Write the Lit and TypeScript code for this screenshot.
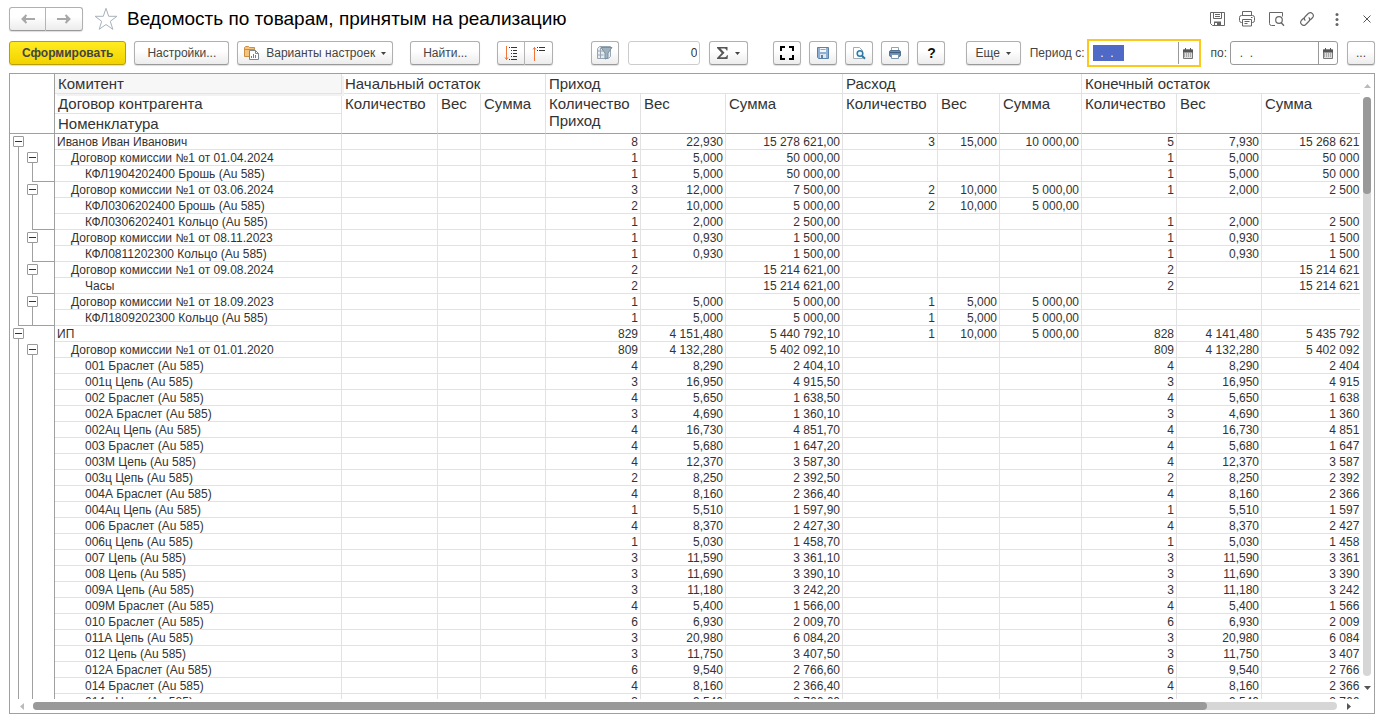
import { LitElement, html, css, svg, nothing } from "lit";
import { customElement } from "lit/decorators.js";
import { classMap } from "lit/directives/class-map.js";

type Row = {
  level: 0 | 1 | 2;
  name: string;
  income: [string, string, string];
  outcome?: [string, string, string];
  balance?: [string, string, string];
  /** Which outline brackets finish on this row: 1 - contract, 2 - contract and consignor. */
  closes?: 1 | 2;
};

const item = (name: string, qty: string, weight: string, sum: string, closes?: 1 | 2): Row => ({
  level: 2, name, income: [qty, weight, sum], balance: [qty, weight, sum], closes,
});

const rows: Row[] = [
  { level: 0, name: "Иванов Иван Иванович", income: ["8", "22,930", "15 278 621,00"], outcome: ["3", "15,000", "10 000,00"], balance: ["5", "7,930", "15 268 621,00"] },
  { level: 1, name: "Договор комиссии №1 от 01.04.2024", income: ["1", "5,000", "50 000,00"], balance: ["1", "5,000", "50 000,00"] },
  item("КФЛ1904202400 Брошь (Au 585)", "1", "5,000", "50 000,00", 1),
  { level: 1, name: "Договор комиссии №1 от 03.06.2024", income: ["3", "12,000", "7 500,00"], outcome: ["2", "10,000", "5 000,00"], balance: ["1", "2,000", "2 500,00"] },
  { level: 2, name: "КФЛ0306202400 Брошь (Au 585)", income: ["2", "10,000", "5 000,00"], outcome: ["2", "10,000", "5 000,00"] },
  item("КФЛ0306202401 Кольцо (Au 585)", "1", "2,000", "2 500,00", 1),
  { level: 1, name: "Договор комиссии №1 от 08.11.2023", income: ["1", "0,930", "1 500,00"], balance: ["1", "0,930", "1 500,00"] },
  item("КФЛ0811202300 Кольцо (Au 585)", "1", "0,930", "1 500,00", 1),
  { level: 1, name: "Договор комиссии №1 от 09.08.2024", income: ["2", "", "15 214 621,00"], balance: ["2", "", "15 214 621,00"] },
  item("Часы", "2", "", "15 214 621,00", 1),
  { level: 1, name: "Договор комиссии №1 от 18.09.2023", income: ["1", "5,000", "5 000,00"], outcome: ["1", "5,000", "5 000,00"] },
  { level: 2, name: "КФЛ1809202300 Кольцо (Au 585)", income: ["1", "5,000", "5 000,00"], outcome: ["1", "5,000", "5 000,00"], closes: 2 },
  { level: 0, name: "ИП", income: ["829", "4 151,480", "5 440 792,10"], outcome: ["1", "10,000", "5 000,00"], balance: ["828", "4 141,480", "5 435 792,10"] },
  { level: 1, name: "Договор комиссии №1 от 01.01.2020", income: ["809", "4 132,280", "5 402 092,10"], balance: ["809", "4 132,280", "5 402 092,10"] },
  item("001 Браслет (Au 585)", "4", "8,290", "2 404,10"),
  item("001ц Цепь (Au 585)", "3", "16,950", "4 915,50"),
  item("002 Браслет (Au 585)", "4", "5,650", "1 638,50"),
  item("002А Браслет (Au 585)", "3", "4,690", "1 360,10"),
  item("002Ац Цепь (Au 585)", "4", "16,730", "4 851,70"),
  item("003 Браслет (Au 585)", "4", "5,680", "1 647,20"),
  item("003М Цепь (Au 585)", "4", "12,370", "3 587,30"),
  item("003ц Цепь (Au 585)", "2", "8,250", "2 392,50"),
  item("004А Браслет (Au 585)", "4", "8,160", "2 366,40"),
  item("004Ац Цепь (Au 585)", "1", "5,510", "1 597,90"),
  item("006 Браслет (Au 585)", "4", "8,370", "2 427,30"),
  item("006ц Цепь (Au 585)", "1", "5,030", "1 458,70"),
  item("007 Цепь (Au 585)", "3", "11,590", "3 361,10"),
  item("008 Цепь (Au 585)", "3", "11,690", "3 390,10"),
  item("009А Цепь (Au 585)", "3", "11,180", "3 242,20"),
  item("009М Браслет (Au 585)", "4", "5,400", "1 566,00"),
  item("010 Браслет (Au 585)", "6", "6,930", "2 009,70"),
  item("011А Цепь (Au 585)", "3", "20,980", "6 084,20"),
  item("012 Цепь (Au 585)", "3", "11,750", "3 407,50"),
  item("012А Браслет (Au 585)", "6", "9,540", "2 766,60"),
  item("014 Браслет (Au 585)", "4", "8,160", "2 366,40"),
  item("014ц Цепь (Au 585)", "3", "9,540", "2 766,60"),
];

const columnWidths = [45, 287, 96, 43, 65, 95, 85, 117, 95, 62, 82, 95, 85, 117];

const icon = (w: number, h: number, body: unknown) =>
  html`<svg width=${w} height=${h} viewBox="0 0 ${w} ${h}" fill="none" aria-hidden="true">${body}</svg>`;

const arrow = (d: string) => icon(14, 10, svg`<path d=${d} stroke="#a8a8a8" stroke-width="2"/>`);
const backIcon = arrow("M14 5H2M5.500 1L1.500 5l4 4M4 3v4");
const forwardIcon = arrow("M0 5h12M8.500 1l4 4-4 4M10 3v4");
const starIcon = icon(24, 24, svg`<path d="M12 1.300l2.700 8h8.200l-6.600 5 2.500 8L12 17.500l-6.800 4.800 2.500-8-6.600-5h8.200z" stroke="#a9b1ba"/>`);
const caretIcon = icon(5, 3, svg`<path d="M0 0h5L2.500 3z" fill="#444"/>`);

const saveIcon = icon(16, 16, svg`<path d="M1.500 1.500h14v13h-12l-2-2z M4.500 1.500v6h8v-6 M6 3.500h5M6 5.500h5" stroke="#666"/><path d="M5 10.500h7v4H5z" fill="#666"/><path d="M6 12h2v2H6z" fill="#fff"/>`);
const printIcon = icon(16, 16, svg`<path d="M3.500 4.500v-4h9v4M3.500 11.500h-1a2 2 0 0 1-2-2v-3a2 2 0 0 1 2-2h11a2 2 0 0 1 2 2v3a2 2 0 0 1-2 2h-1M3.500 8.500h9v6.500h-9zM5.500 10.500h5M5.500 12.500h3M12 6.500h1.500" stroke="#666"/>`);
const previewIcon = icon(16, 16, svg`<path d="M6 14.500H2.500a2 2 0 0 1-2-2V1.500h13v4" stroke="#666"/><circle cx="10" cy="9" r="3.300" stroke="#666" stroke-width="1.200"/><path d="M12 11.500l3 3.200" stroke="#666" stroke-width="1.400"/>`);
const linkIcon = icon(16, 16, svg`<path d="M6.300 9.700a3 3 0 0 1 0-4.200l3.200-3.200a3 3 0 0 1 4.200 4.200l-2.500 2.500M9.700 6.300a3 3 0 0 1 0 4.200l-3.200 3.200a3 3 0 0 1-4.200-4.200L4.800 7" stroke="#666" stroke-width="1.200"/>`);
const moreIcon = icon(4, 13, svg`<circle cx="2" cy="1.500" r="1.500" fill="#666"/><circle cx="2" cy="6.500" r="1.500" fill="#666"/><circle cx="2" cy="11.500" r="1.500" fill="#666"/>`);
const closeIcon = icon(8, 8, svg`<path d="M.5.5l7 7M7.500.5l-7 7" stroke="#555"/>`);

const variantsIcon = icon(16, 16, svg`<path d="M.5 2.500l1-1h3l1 1h5v3h-3v6h-7z" fill="#f5c37c" stroke="#c98f45"/><path d="M1 4.500h9" stroke="#c98f45"/><path d="M5.500 5.500h6l3 3v6h-9z" fill="#fff" stroke="#7d8790"/><path d="M11.500 5.500v3h3" stroke="#7d8790"/><path d="M7.500 11v2" stroke="#d9534f"/><path d="M9.500 9v4" stroke="#3aa655"/><path d="M11.500 10v3" stroke="#d9534f"/>`);
const expandGroupsIcon = icon(14, 15, svg`<path d="M2.500 0v14M1 11.500l1.500 2 1.500-2" stroke="#f0763c"/><path d="M5 1.500h1M7 1.500h6M7 4.500h1M9 4.500h4M7 7.500h1M9 7.500h4M7 10.500h1M9 10.500h4M5 13.500h1M7 13.500h6" stroke="#333"/>`);
const collapseGroupsIcon = icon(14, 15, svg`<path d="M2.500 15V1M1 3.500l1.500-2 1.500 2" stroke="#f0763c"/><path d="M5 1.500h1M7 1.500h6M5 4.500h1M7 4.500h6" stroke="#333"/>`);
const filterIcon = icon(16, 16, svg`<path d="M.5 3.500l2-2h11v10l-2 2H.5z" fill="#e6ebef" stroke="#98a6b3"/><path d="M.5 6h6M.5 10h6M3.500 3v11" stroke="#98a6b3"/><path d="M4 2.500h11L11 8v5l-3 1V8z" fill="#9fb0bf" stroke="#7890a3"/>`);
const sigmaIcon = icon(12, 12, svg`<path d="M0 0h10.500v3.500h-1C9 2 8.500 1.500 7 1.500H3.500l4 4.200-4.500 4.500h4.500c1.500 0 2-.7 2.500-2h1L10.500 12H0v-1l4.700-5L0 1z" fill="#555"/>`);
const fullIcon = icon(14, 14, svg`<path d="M1 5V1h4M9 1h4v4M13 9v4H9M5 13H1V9" stroke="#000" stroke-width="2"/>`);
const diskIcon = icon(14, 14, svg`<path d="M1.500 1.500h11v11h-10l-1-1z" fill="#8fb2d4" stroke="#5b82a8"/><path d="M4 2h6v4H4z" fill="#f5f8fb"/><path d="M4.500 3.500h5" stroke="#8fa8bd"/><path d="M4 8h6v4H4z" fill="#dfe8f0"/><path d="M5 9h2v3H5z" fill="#5b82a8"/>`);
const lookIcon = icon(14, 14, svg`<path d="M1.500 1.500h6l3 3v8h-9z" fill="#fff" stroke="#a3abb3"/><circle cx="8" cy="7.500" r="2.800" fill="#eaf4fa" stroke="#2a7aa8" stroke-width="1.500"/><path d="M10 9.800l3 3" stroke="#2a7aa8" stroke-width="2"/>`);
const printerIcon = icon(14, 14, svg`<path d="M3.500 5V1.500h7V5" fill="#fff" stroke="#90a4b8"/><rect x="1.500" y="4.500" width="11" height="6" rx="1.500" fill="#6f90b0" stroke="#4f7292"/><path d="M2 6.500h10" stroke="#3f6080"/><path d="M3.500 8.500h7v4h-7z" fill="#fff" stroke="#7b96b0"/>`);
const calendarIcon = icon(10, 11, svg`<path d="M.5 2h9v8.500h-9z" fill="#ddd" stroke="#777"/><path d="M0 1.500h10v3H0z" fill="#555"/><path d="M2.500 0v2M7.500 0v2" stroke="#555"/><path d="M1 6h8M1 8h8" stroke="#777" stroke-dasharray="1 1"/>`);

@customElement("report-grid")
export class ReportGrid extends LitElement {
  static styles = css`
    :host { display: grid; grid-template: minmax(0, 1fr) 14px / minmax(0, 1fr) 14px; border: 1px solid #a0a0a0; background: #fff; color: #333; font: 12px/14px "Liberation Sans", Arial, sans-serif; }
    .viewport { overflow: auto; scrollbar-width: none; }
    table { border-collapse: separate; border-spacing: 0; table-layout: fixed; width: max-content; }
    th, td { box-sizing: border-box; padding: 0 2px; border: 0 solid #e2e2e2; border-width: 0 1px 1px 0; white-space: nowrap; }
    th { height: 20px; padding: 1px 3px; font-size: 15px; line-height: 17px; font-weight: 400; text-align: left; vertical-align: top; }
    td { height: 16px; text-align: right; }
    .current { position: relative; background: #f7f7f7; box-shadow: 2px 2px 0 #f2f2f2; }
    .last { border-bottom-color: #a0a0a0; }
    .gutter { padding: 0 0 0 3px; border-right-color: #a0a0a0; }
    td.gutter { border-bottom: 0; }
    .lanes { display: flex; height: 16px; }
    .lane { display: flex; flex-direction: column; width: 14px; }
    .lane:last-child { flex: 1; }
    .lane.boxed { padding-top: 2px; height: 14px; }
    .stem { flex: 1; margin-left: 5px; border-left: 1px solid #a0a0a0; }
    .closed .stem, .lane.joined { border-bottom: 1px solid #a0a0a0; }
    .lane.joined .stem { border-bottom: 0; margin-bottom: -1px; }
    .toggle { display: grid; place-items: center; width: 11px; height: 11px; padding: 0; border: 1px solid #999; border-radius: 1px; background: #fff; }
    .name { text-align: left; }
    .level1 { padding-left: 16px; }
    .level2 { padding-left: 30px; }
    .bar { display: flex; align-items: center; }
    .vertical { flex-direction: column; }
    .end { display: grid; place-items: center; flex: none; width: 23px; height: 14px; padding: 0; border: 0; background: none; }
    .vertical .end { width: 14px; height: 23px; }
    .track { flex: 1; height: 8px; border-radius: 4px; background: #d6d6d6; }
    .vertical .track { width: 8px; height: auto; }
    .thumb { height: 8px; width: 90%; border-radius: 4px; background: #999; }
    .vertical .thumb { width: 8px; height: 97px; }
  `;

  private lanes(row: Row, inContract: boolean) {
    const box = html`<button class="toggle" aria-label="Свернуть">${icon(7, 1, svg`<path d="M0 .5h7" stroke="#333"/>`)}</button>`;
    const both = row.closes === 2;
    return html`<div class="lanes">
      <div class=${classMap({ lane: true, boxed: row.level === 0, closed: both })}>
        ${row.level === 0 ? box : nothing}<div class="stem"></div>
      </div>
      <div class=${classMap({ lane: true, boxed: row.level === 1, closed: row.closes === 1, joined: both })}>
        ${row.level === 1 ? box : nothing}${inContract ? html`<div class="stem"></div>` : nothing}
      </div>
    </div>`;
  }

  private values(v?: [string, string, string]) {
    return (v ?? ["", "", ""]).map((x) => html`<td>${x}</td>`);
  }

  render() {
    return html`
      <div class="viewport">
        <table>
          <colgroup>${columnWidths.map((w) => html`<col width=${w} />`)}</colgroup>
          <thead>
            <tr>
              <th class="gutter last" rowspan="3"></th>
              <th class="current">Комитент</th>
              <th colspan="3">Начальный остаток</th>
              <th colspan="3">Приход</th>
              <th colspan="3">Расход</th>
              <th colspan="3">Конечный остаток</th>
            </tr>
            <tr>
              <th>Договор контрагента</th>
              ${[0, 1, 2, 3].map((g) => html`
                <th class="last" rowspan="2">Количество${g === 1 ? html`<br />Приход` : nothing}</th>
                <th class="last" rowspan="2">Вес</th>
                <th class="last" rowspan="2">Сумма</th>`)}
            </tr>
            <tr><th class="last">Номенклатура</th></tr>
          </thead>
          <tbody>
            ${rows.map((row) => html`<tr>
              <td class="gutter">${this.lanes(row, row.level > 0)}</td>
              <td class="name level${row.level}">${row.name}</td>
              ${this.values()}${this.values(row.income)}${this.values(row.outcome)}${this.values(row.balance)}
            </tr>`)}
          </tbody>
        </table>
      </div>
      <div class="bar vertical">
        <button class="end" aria-label="Вверх">${icon(7, 4, svg`<path d="M3.500 0L7 4H0z" fill="#bbb"/>`)}</button>
        <div class="track"><div class="thumb"></div></div>
        <button class="end" aria-label="Вниз">${icon(7, 4, svg`<path d="M0 0h7L3.500 4z" fill="#555"/>`)}</button>
      </div>
      <div class="bar">
        <button class="end" aria-label="Влево">${icon(4, 7, svg`<path d="M4 0v7L0 3.500z" fill="#bbb"/>`)}</button>
        <div class="track"><div class="thumb"></div></div>
        <button class="end" aria-label="Вправо">${icon(4, 7, svg`<path d="M0 0v7l4-3.500z" fill="#555"/>`)}</button>
      </div>
    `;
  }
}

@customElement("app-root")
export class AppRoot extends LitElement {
  static styles = css`
    :host { display: flex; flex-direction: column; box-sizing: border-box; height: 100vh; padding: 7px 11px 7px 9px; background: #fff; color: #444; font: 12px/16px "Liberation Sans", Arial, sans-serif; }
    button, input { font: inherit; color: inherit; box-sizing: border-box; }
    header { display: flex; align-items: center; height: 24px; margin-right: -7px; }
    h1 { flex: 1; margin: 0 0 0 9px; font-size: 19px; line-height: 24px; font-weight: 400; color: #000; white-space: nowrap; }
    .plain { display: grid; place-items: center; width: 30px; height: 24px; padding: 0; border: 0; background: none; }
    .star { width: 24px; margin-left: 11px; }
    .toolbar { display: flex; align-items: center; gap: 17px; height: 24px; margin: 10px 0 8px; }
    .group { display: flex; align-items: center; gap: 8px; }
    .totals { margin-left: 21px; gap: 9px; }
    .output { margin-left: 8px; }
    .period { margin-left: auto; gap: 9px; }
    .btn { display: flex; align-items: center; justify-content: center; gap: 6px; height: 24px; padding: 0 12px; border: 1px solid #b0b0b0; border-bottom-color: #999; border-radius: 3px; background: linear-gradient(#fff 40%, #ececec); box-shadow: 0 1px 1px #ddd; white-space: nowrap; }
    .primary { border-color: #b8a000; background: linear-gradient(#ffec20, #f2d200); font-weight: 700; }
    .menu { padding: 0 6px; }
    .tool { width: 28px; padding: 0; }
    .wide { width: 39px; }
    .more { width: 55px; }
    .help { font-size: 14px; font-weight: 700; color: #111; }
    .pair { display: flex; }
    .pair .btn { padding: 0; width: 28px; }
    .nav .btn { width: 37px; }
    .pair .btn:first-child { border-radius: 3px 0 0 3px; }
    .pair .btn:last-child { border-left-width: 0; border-radius: 0 3px 3px 0; }
    .number { width: 72px; height: 24px; padding: 0 2px; border: 1px solid #ccc; border-radius: 3px; text-align: right; color: #333; }
    .field { display: flex; align-items: center; gap: 3px; white-space: nowrap; }
    .date { display: flex; box-sizing: border-box; height: 24px; width: 108px; border: 1px solid #999; border-radius: 3px; background: #fff; }
    .date.active { height: 28px; width: 114px; padding: 1px 2px; border: 2px solid #fbc91e; border-radius: 0; }
    .date input { flex: 1; min-width: 0; padding: 0 2px; border: 0; outline: 0; background: none; }
    .date.active input { background: linear-gradient(#000, #000) 32px center / 1px 16px no-repeat; }
    .date input::selection { background: #4f69c6; color: #fff; }
    .calendar { display: grid; place-items: center; width: 19px; padding: 0; border: 0; border-left: 1px solid #999; background: none; }
    report-grid { flex: 1; min-height: 0; }
  `;

  firstUpdated() {
    const from = this.renderRoot.querySelector<HTMLInputElement>("#from");
    from?.focus();
    from?.select();
  }

  render() {
    return html`
      <header>
        <div class="pair nav">
          <button class="btn" aria-label="Назад">${backIcon}</button>
          <button class="btn" aria-label="Вперед">${forwardIcon}</button>
        </div>
        <button class="plain star" aria-label="В избранное">${starIcon}</button>
        <h1>Ведомость по товарам, принятым на реализацию</h1>
        <button class="plain" aria-label="Сохранить">${saveIcon}</button>
        <button class="plain" aria-label="Печать">${printIcon}</button>
        <button class="plain" aria-label="Просмотр">${previewIcon}</button>
        <button class="plain" aria-label="Ссылка">${linkIcon}</button>
        <button class="plain" aria-label="Меню">${moreIcon}</button>
        <button class="plain" aria-label="Закрыть">${closeIcon}</button>
      </header>
      <div class="toolbar">
        <div class="group">
          <button class="btn primary">Сформировать</button>
          <button class="btn">Настройки...</button>
          <button class="btn menu">${variantsIcon}Варианты настроек${caretIcon}</button>
        </div>
        <button class="btn">Найти...</button>
        <div class="pair">
          <button class="btn" aria-label="Развернуть группы">${expandGroupsIcon}</button>
          <button class="btn" aria-label="Свернуть группы">${collapseGroupsIcon}</button>
        </div>
        <div class="group totals">
          <button class="btn tool" aria-label="Отбор">${filterIcon}</button>
          <input class="number" aria-label="Сумма выделенных" value="0" />
          <button class="btn tool wide" aria-label="Итоги">${sigmaIcon}${caretIcon}</button>
        </div>
        <div class="group output">
          <button class="btn tool" aria-label="На весь экран">${fullIcon}</button>
          <button class="btn tool" aria-label="Сохранить файл">${diskIcon}</button>
          <button class="btn tool" aria-label="Предварительный просмотр">${lookIcon}</button>
          <button class="btn tool" aria-label="Напечатать">${printerIcon}</button>
          <button class="btn tool help">?</button>
        </div>
        <div class="group period">
          <button class="btn tool more">Еще${caretIcon}</button>
          <div class="field">
            <label for="from">Период с:</label>
            <div class="date active">
              <input id="from" .value=${"  .  .   "} />
              <button class="calendar" aria-label="Выбрать начало">${calendarIcon}</button>
            </div>
          </div>
          <div class="field">
            <label for="to">по:</label>
            <div class="date">
              <input id="to" .value=${"  .  .   "} />
              <button class="calendar" aria-label="Выбрать конец">${calendarIcon}</button>
            </div>
          </div>
          <button class="btn tool">...</button>
        </div>
      </div>
      <report-grid></report-grid>
    `;
  }
}
